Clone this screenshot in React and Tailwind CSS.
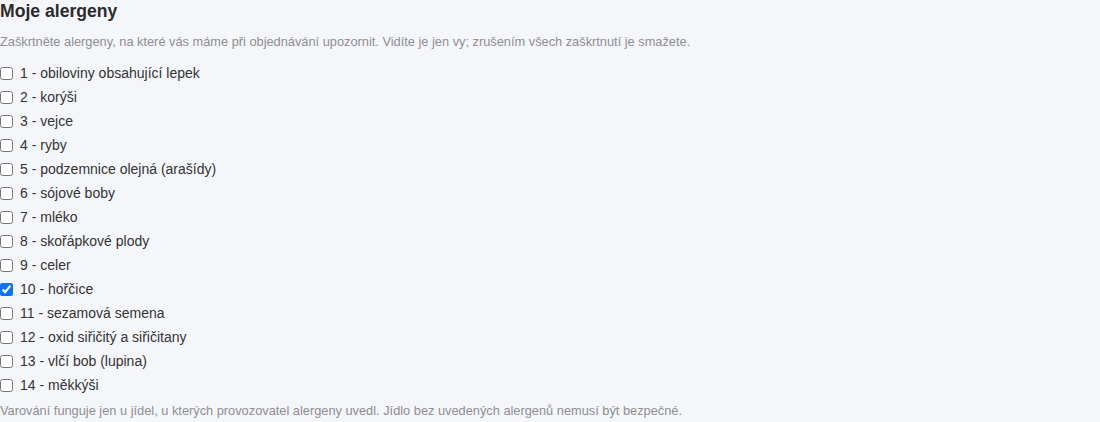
import { useState } from 'react';

const ALERGENY = [
  'obiloviny obsahující lepek',
  'korýši',
  'vejce',
  'ryby',
  'podzemnice olejná (arašídy)',
  'sójové boby',
  'mléko',
  'skořápkové plody',
  'celer',
  'hořčice',
  'sezamová semena',
  'oxid siřičitý a siřičitany',
  'vlčí bob (lupina)',
  'měkkýši',
];

export default function App() {
  const [vybrane, setVybrane] = useState([10]);

  const toggle = (n) =>
    setVybrane((v) => (v.includes(n) ? v.filter((x) => x !== n) : [...v, n]));

  return (
    <div className="min-h-screen bg-[#f5f6fa] font-['Liberation_Sans',Arial,sans-serif] text-[#333]">
      <h2 className="text-[17.6px] font-bold leading-[22px] text-[#2b2b2b]">Moje alergeny</h2>
      <p className="mt-3 text-[12.8px] leading-4 text-[#8e8e93]">
        Zaškrtněte alergeny, na které vás máme při objednávání upozornit. Vidíte je jen vy; zrušením všech zaškrtnutí je smažete.
      </p>

      {/* Seznam alergenu */}
      <ul className="mt-[11px]">
        {ALERGENY.map((nazev, i) => {
          const n = i + 1;
          return (
            <li key={n} className="h-6 flex items-center">
              <label className="flex items-center gap-[7px] text-[14px] leading-5 cursor-pointer">
                <input
                  type="checkbox"
                  className="m-0 h-[13px] w-[13px] accent-[#0a74f5]"
                  checked={vybrane.includes(n)}
                  onChange={() => toggle(n)}
                />
                <span>{n} - {nazev}</span>
              </label>
            </li>
          );
        })}
      </ul>

      <p className="mt-1.5 text-[12.8px] leading-4 text-[#8e8e93]">
        Varování funguje jen u jídel, u kterých provozovatel alergeny uvedl. Jídlo bez uvedených alergenů nemusí být bezpečné.
      </p>
    </div>
  );
}
